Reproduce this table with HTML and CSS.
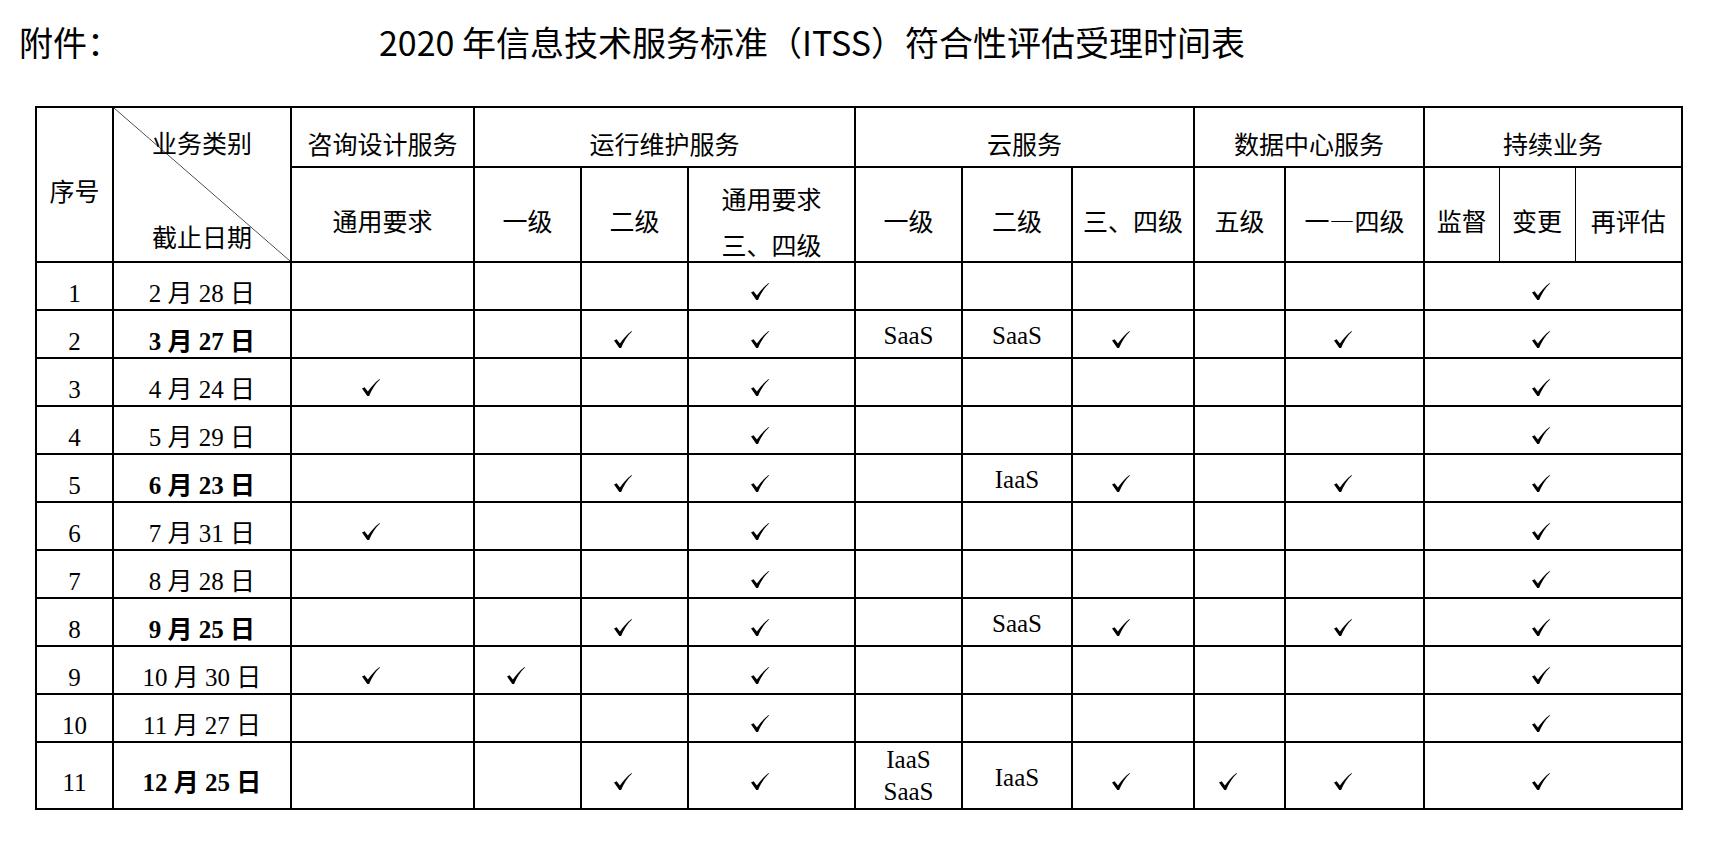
FILE: index.html
```html
<!DOCTYPE html>
<html lang="zh-CN">
<head>
<meta charset="utf-8">
<title>2020年信息技术服务标准（ITSS）符合性评估受理时间表</title>
<link rel="stylesheet" href="styles.css">
</head>
<body>
<svg class="defs" width="0" height="0" aria-hidden="true">
  <symbol id="ck" viewBox="0 0 18 17">
    <path d="M0 9.6 L2.6 8.2 L5.9 12.6 C9 8 12.8 3.6 17.6 0 L18 0.5 C13.6 4.6 9.8 10.2 7.1 17 L5.3 17 Z"/>
  </symbol>
</svg>
<div class="page">
  <div class="title"><span class="att">附件：</span><span class="main-title">2020 年信息技术服务标准（ITSS）符合性评估受理时间表</span></div>
  <table class="sched">
    <colgroup>
      <col class="w77"><col class="w178"><col class="w183"><col class="w107"><col class="w107"><col class="w167"><col class="w107"><col class="w110"><col class="w122"><col class="w91"><col class="w139"><col class="w75"><col class="w76"><col class="w107">
    </colgroup>
    <tbody class="hd">
      <tr class="h1">
        <td rowspan="2">序号</td>
        <td rowspan="2" class="diag"><div>业务类别</div><div class="d2">截止日期</div></td>
        <td>咨询设计服务</td>
        <td colspan="3">运行维护服务</td>
        <td colspan="3">云服务</td>
        <td colspan="2">数据中心服务</td>
        <td colspan="3">持续业务</td>
      </tr>
      <tr class="h2">
        <td>通用要求</td>
        <td>一级</td>
        <td>二级</td>
        <td class="two"><div>通用要求</div><div class="l2">三、四级</div></td>
        <td>一级</td>
        <td>二级</td>
        <td>三、四级</td>
        <td>五级</td>
        <td>一<span class="dash">—</span>四级</td>
        <td class="tr">监督</td>
        <td class="tl tr">变更</td>
        <td class="tl">再评估</td>
      </tr>
    </tbody>
    <tbody class="bd">
      <tr class="r">
        <td>1</td><td>2 月 28 日</td>
        <td></td><td></td><td></td><td class="k"><svg class="ck"><use href="#ck"/></svg></td>
        <td></td><td></td><td></td><td></td><td></td>
        <td colspan="3" class="k"><svg class="ck"><use href="#ck"/></svg></td>
      </tr>
      <tr class="r">
        <td>2</td><td class="b">3 月 27 日</td>
        <td></td><td></td><td class="k"><svg class="ck"><use href="#ck"/></svg></td><td class="k"><svg class="ck"><use href="#ck"/></svg></td>
        <td class="sv">SaaS</td><td class="sv">SaaS</td><td class="k"><svg class="ck"><use href="#ck"/></svg></td><td></td><td class="k"><svg class="ck"><use href="#ck"/></svg></td>
        <td colspan="3" class="k"><svg class="ck"><use href="#ck"/></svg></td>
      </tr>
      <tr class="r">
        <td>3</td><td>4 月 24 日</td>
        <td class="k"><svg class="ck"><use href="#ck"/></svg></td><td></td><td></td><td class="k"><svg class="ck"><use href="#ck"/></svg></td>
        <td></td><td></td><td></td><td></td><td></td>
        <td colspan="3" class="k"><svg class="ck"><use href="#ck"/></svg></td>
      </tr>
      <tr class="r">
        <td>4</td><td>5 月 29 日</td>
        <td></td><td></td><td></td><td class="k"><svg class="ck"><use href="#ck"/></svg></td>
        <td></td><td></td><td></td><td></td><td></td>
        <td colspan="3" class="k"><svg class="ck"><use href="#ck"/></svg></td>
      </tr>
      <tr class="r">
        <td>5</td><td class="b">6 月 23 日</td>
        <td></td><td></td><td class="k"><svg class="ck"><use href="#ck"/></svg></td><td class="k"><svg class="ck"><use href="#ck"/></svg></td>
        <td></td><td class="sv">IaaS</td><td class="k"><svg class="ck"><use href="#ck"/></svg></td><td></td><td class="k"><svg class="ck"><use href="#ck"/></svg></td>
        <td colspan="3" class="k"><svg class="ck"><use href="#ck"/></svg></td>
      </tr>
      <tr class="r">
        <td>6</td><td>7 月 31 日</td>
        <td class="k"><svg class="ck"><use href="#ck"/></svg></td><td></td><td></td><td class="k"><svg class="ck"><use href="#ck"/></svg></td>
        <td></td><td></td><td></td><td></td><td></td>
        <td colspan="3" class="k"><svg class="ck"><use href="#ck"/></svg></td>
      </tr>
      <tr class="r">
        <td>7</td><td>8 月 28 日</td>
        <td></td><td></td><td></td><td class="k"><svg class="ck"><use href="#ck"/></svg></td>
        <td></td><td></td><td></td><td></td><td></td>
        <td colspan="3" class="k"><svg class="ck"><use href="#ck"/></svg></td>
      </tr>
      <tr class="r">
        <td>8</td><td class="b">9 月 25 日</td>
        <td></td><td></td><td class="k"><svg class="ck"><use href="#ck"/></svg></td><td class="k"><svg class="ck"><use href="#ck"/></svg></td>
        <td></td><td class="sv">SaaS</td><td class="k"><svg class="ck"><use href="#ck"/></svg></td><td></td><td class="k"><svg class="ck"><use href="#ck"/></svg></td>
        <td colspan="3" class="k"><svg class="ck"><use href="#ck"/></svg></td>
      </tr>
      <tr class="r">
        <td>9</td><td>10 月 30 日</td>
        <td class="k"><svg class="ck"><use href="#ck"/></svg></td><td class="k"><svg class="ck"><use href="#ck"/></svg></td><td></td><td class="k"><svg class="ck"><use href="#ck"/></svg></td>
        <td></td><td></td><td></td><td></td><td></td>
        <td colspan="3" class="k"><svg class="ck"><use href="#ck"/></svg></td>
      </tr>
      <tr class="r">
        <td>10</td><td>11 月 27 日</td>
        <td></td><td></td><td></td><td class="k"><svg class="ck"><use href="#ck"/></svg></td>
        <td></td><td></td><td></td><td></td><td></td>
        <td colspan="3" class="k"><svg class="ck"><use href="#ck"/></svg></td>
      </tr>
      <tr class="rl">
        <td>11</td><td class="b">12 月 25 日</td>
        <td></td><td></td><td class="k"><svg class="ck"><use href="#ck"/></svg></td><td class="k"><svg class="ck"><use href="#ck"/></svg></td>
        <td class="sv2">IaaS<br>SaaS</td><td class="sv sv-l">IaaS</td><td class="k"><svg class="ck"><use href="#ck"/></svg></td><td class="k"><svg class="ck"><use href="#ck"/></svg></td><td class="k"><svg class="ck"><use href="#ck"/></svg></td>
        <td colspan="3" class="k"><svg class="ck"><use href="#ck"/></svg></td>
      </tr>
    </tbody>
  </table>
</div>
</body>
</html>
```

FILE: styles.css
```css
body {
  margin: 0;
  background: #fff;
  color: #000;
}

.defs {
  position: absolute;
  width: 0;
  height: 0;
  overflow: hidden;
}

.page {
  padding-top: 22px;
}

.title {
  display: flex;
  height: 40px;
  line-height: 40px;
  padding-left: 19px;
  margin-bottom: 44px;
  font-family: "Noto Sans CJK SC", sans-serif;
  font-size: 34px;
  white-space: nowrap;
}

.att {
  width: 360px;
  flex: none;
}

.sched {
  border-collapse: collapse;
  table-layout: fixed;
  width: 1646px;
  margin-left: 35px;
}

.w77 { width: 77px; }
.w178 { width: 178px; }
.w183 { width: 183px; }
.w107 { width: 107px; }
.w167 { width: 167px; }
.w110 { width: 110px; }
.w122 { width: 122px; }
.w91 { width: 91px; }
.w139 { width: 139px; }
.w75 { width: 75px; }
.w76 { width: 76px; }

.sched td {
  border: 2px solid #000;
  padding: 14px 0 0;
  text-align: center;
  vertical-align: middle;
  font-size: 25px;
  line-height: 25px;
  white-space: nowrap;
}

.h1 { height: 60px; }
.h2 { height: 95px; }
.r { height: 48px; }
.rl { height: 67px; }

.hd td {
  font-family: "Noto Sans CJK SC", sans-serif;
  padding-top: 12px;
}

.hd td.tr { border-right-width: 1px; }
.hd td.tl { border-left-width: 1px; }

.dash {
  font-family: "Noto Sans CJK SC", sans-serif;
}

.hd td.diag {
  vertical-align: top;
  padding-top: 22px;
  background: linear-gradient(to top right, transparent calc(50% - 0.7px), #444 50%, transparent calc(50% + 0.7px));
}

.diag .d2 {
  margin-top: 69px;
}

.hd td.two {
  padding-top: 14px;
}

.two .l2 {
  margin-top: 21px;
}

.bd td {
  font-family: "Liberation Serif", "Noto Sans CJK SC", serif;
}

.bd td.b {
  font-weight: bold;
}

.bd td.sv {
  padding-top: 2px;
}

.bd td.sv-l {
  padding-top: 4px;
}

.bd td.sv2 {
  padding-top: 1px;
  line-height: 32px;
}

.bd td.k {
  padding-top: 11px;
}

.ck {
  display: block;
  width: 18px;
  height: 17px;
  margin-left: calc(50% - 21px);
  fill: #000;
}
```
